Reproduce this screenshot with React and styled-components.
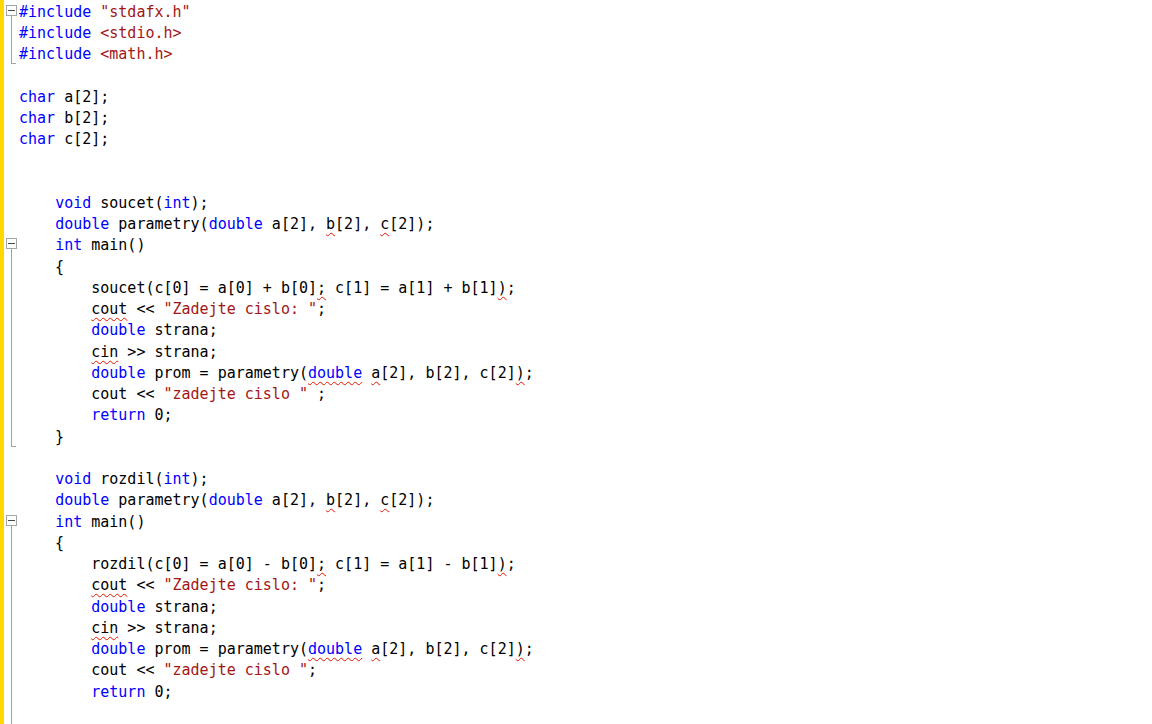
import React from "react";
import styled, { createGlobalStyle } from "styled-components";

const GlobalStyle = createGlobalStyle`
  html, body {
    margin: 0;
    padding: 0;
    background: #ffffff;
    overflow: hidden;
  }
`;

// @kw@  $string$  ~squiggle~  ^keyword with squiggle^
const LINES = [
  ["start", '@#include@ $"stdafx.h"$'],
  ["mid", "@#include@ $<stdio.h>$"],
  ["end", "@#include@ $<math.h>$"],
  [null, ""],
  [null, "@char@ a[2];"],
  [null, "@char@ b[2];"],
  [null, "@char@ c[2];"],
  [null, ""],
  [null, ""],
  [null, "    @void@ soucet(@int@);"],
  [null, "    @double@ parametry(@double@ a[2], ~b~[2], ~c~[2]);"],
  ["start", "    @int@ main()"],
  ["mid", "    {"],
  ["mid", "        soucet(c[0] = a[0] + b[0]~;~ c[1] = a[1] + b[1]~)~;"],
  ["mid", '        ~cout~ << $"Zadejte cislo: "$;'],
  ["mid", "        @double@ strana;"],
  ["mid", "        ~cin~ >> strana;"],
  ["mid", "        @double@ prom = parametry(^double^ ~a~[2], b[2], c[2]~)~;"],
  ["mid", '        cout << $"zadejte cislo "$ ;'],
  ["mid", "        @return@ 0;"],
  ["end", "    }"],
  [null, ""],
  [null, "    @void@ rozdil(@int@);"],
  [null, "    @double@ parametry(@double@ a[2], ~b~[2], ~c~[2]);"],
  ["start", "    @int@ main()"],
  ["mid", "    {"],
  ["mid", "        rozdil(c[0] = a[0] - b[0]~;~ c[1] = a[1] - b[1]~)~;"],
  ["mid", '        ~cout~ << $"Zadejte cislo: "$;'],
  ["mid", "        @double@ strana;"],
  ["mid", "        ~cin~ >> strana;"],
  ["mid", "        @double@ prom = parametry(^double^ ~a~[2], b[2], c[2]~)~;"],
  ["mid", '        cout << $"zadejte cislo "$;'],
  ["mid", "        @return@ 0;"],
  ["mid", ""],
];

const tokenize = (src) =>
  src
    .split(/(@[^@]*@|\$[^$]*\$|~[^~]*~|\^[^^]*\^)/)
    .filter(Boolean)
    .map((part) => {
      const mark = part[0];
      const inner = part.slice(1, -1);
      if (mark === "@") return { kind: "kw", text: inner };
      if (mark === "$") return { kind: "str", text: inner };
      if (mark === "~") return { kind: "plain", text: inner, squiggle: true };
      if (mark === "^") return { kind: "kw", text: inner, squiggle: true };
      return { kind: "plain", text: part };
    });

const Editor = styled.div`
  display: flex;
  height: 100vh;
  overflow: hidden;
  background: #ffffff;
`;

const ChangeBar = styled.div`
  flex: 0 0 4px;
  background: #ffd800;
`;

const Lines = styled.div`
  flex: 1;
  display: flex;
  flex-direction: column;
  padding-top: 1.5px;
`;

const Row = styled.div`
  display: flex;
  height: 21.25px;
  flex: 0 0 21.25px;
`;

const Outline = styled.div`
  position: relative;
  flex: 0 0 15px;

  /* guide line */
  &::before {
    content: "";
    display: ${({ $mode }) => ($mode ? "block" : "none")};
    position: absolute;
    left: 7px;
    width: 1px;
    background: #a5a5a5;
    top: ${({ $mode }) => ($mode === "start" ? "14px" : "-1.5px")};
    bottom: ${({ $mode }) => ($mode === "end" ? "1px" : "0")};
  }

  /* end tick */
  &::after {
    content: "";
    display: ${({ $mode }) => ($mode === "end" ? "block" : "none")};
    position: absolute;
    left: 7px;
    bottom: 1px;
    width: 5px;
    height: 1px;
    background: #a5a5a5;
  }
`;

const FoldBox = styled.span`
  position: absolute;
  left: 2px;
  top: 3px;
  width: 9px;
  height: 9px;
  border: 1px solid #a5a5a5;
  background: #ffffff;
  display: flex;
  align-items: center;
  justify-content: center;

  &::before {
    content: "";
    width: 7px;
    height: 1px;
    background: #4a4a4a;
  }
`;

const Code = styled.div`
  flex: 1;
  white-space: pre;
  font-family: "DejaVu Sans Mono", "Liberation Mono", monospace;
  font-size: 15px;
  line-height: 21.25px;
  color: #000000;
`;

const Token = styled.span`
  color: ${({ $kind }) =>
    $kind === "kw" ? "#0000ff" : $kind === "str" ? "#a31515" : "#000000"};
  text-decoration: ${({ $squiggle }) =>
    $squiggle ? "underline wavy #e51400" : "none"};
  text-decoration-thickness: 1px;
  text-underline-offset: 3px;
  text-decoration-skip-ink: none;
`;

const CodeLine = ({ mode, src }) => (
  <Row>
    <Outline $mode={mode}>{mode === "start" && <FoldBox />}</Outline>
    <Code>
      {tokenize(src).map((t, i) => (
        <Token key={i} $kind={t.kind} $squiggle={t.squiggle}>
          {t.text}
        </Token>
      ))}
    </Code>
  </Row>
);

export default function App() {
  return (
    <>
      <GlobalStyle />
      <Editor>
        <ChangeBar />
        <Lines>
          {LINES.map(([mode, src], i) => (
            <CodeLine key={i} mode={mode} src={src} />
          ))}
        </Lines>
      </Editor>
    </>
  );
}
